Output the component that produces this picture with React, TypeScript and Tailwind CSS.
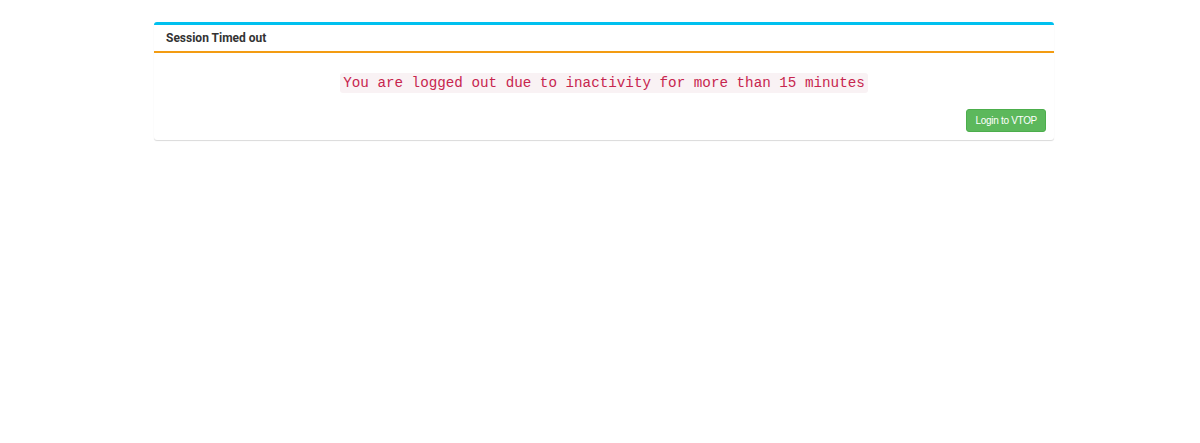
import React from 'react';

export default function App() {
  return (
    <div className="min-h-[443px] bg-white pt-[22px] font-['Liberation_Sans',Arial,sans-serif]">
      <div className="ml-[154px] w-[900px] rounded-[3px] border-t-[3px] border-[#00c0ef] bg-white shadow-[0_1px_1px_rgba(0,0,0,0.15)]">
        {/* Header */}
        <div className="flex h-[28px] items-center border-b-[2px] border-[#f39c12] px-[12px]">
          <h3 className="font-['Roboto',sans-serif] text-[12px] font-bold text-[#333]">Session Timed out</h3>
        </div>

        {/* Body */}
        <div className="px-[8px] pt-[20px] pb-[8px]">
          <div className="flex justify-center">
            <code className="rounded-[3px] bg-[#f9f2f4] px-[3px] py-[1px] font-['Liberation_Mono','Courier_New',monospace] text-[14.26px] leading-[18px] text-[#c7254e]">
              You are logged out due to inactivity for more than 15 minutes
            </code>
          </div>
          <div className="mt-[16px] flex justify-end">
            <button className="h-[23px] rounded-[3px] border border-[#4cae4c] bg-[#5cb85c] px-[8px] text-[10px] tracking-[-0.3px] text-white">
              Login to VTOP
            </button>
          </div>
        </div>
      </div>
    </div>
  );
}
